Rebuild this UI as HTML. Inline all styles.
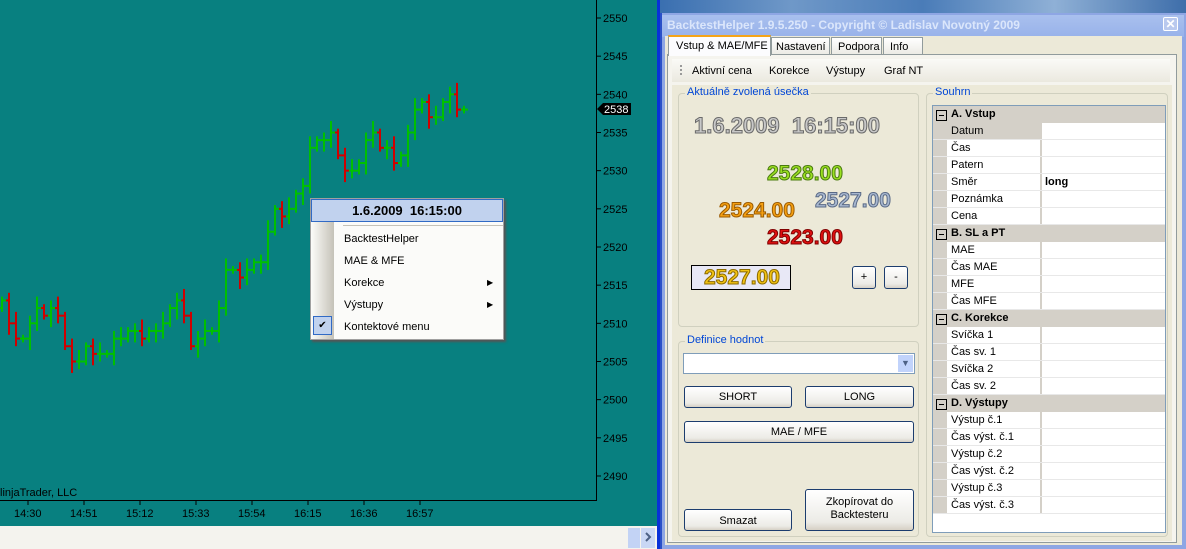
<!DOCTYPE html>
<html><head><meta charset="utf-8"><style>
*{margin:0;padding:0;box-sizing:border-box}
body{width:1186px;height:549px;overflow:hidden;position:relative;font-family:"Liberation Sans",Arial,sans-serif;font-size:11px;background:#088080}
.a{position:absolute}
.t{position:absolute;white-space:nowrap}
.btn{position:absolute;border:1px solid #1c3d6e;border-radius:3px;background:linear-gradient(#fff,#ecebe6 80%,#d6d0c5);text-align:center;font-size:11px;color:#000}
.gb{position:absolute;border:1px solid #d0d0bf;border-radius:4px}
.gl{position:absolute;background:#ece9d8;color:#0046d5;padding:0 2px;font-size:11px;top:-8px;left:6px;white-space:nowrap}
.big{position:absolute;font-family:"Liberation Sans",sans-serif;font-weight:bold;font-size:21px;white-space:nowrap}
.row{position:absolute;left:0;width:233px;height:17px;border-bottom:1px solid #e8e8e8}
.row .n{position:absolute;left:14px;width:94px;height:16px;background:#fff;border-right:1px solid #d4d0c8;padding:2px 4px;font-size:11px;white-space:nowrap}
.row .v{position:absolute;left:109px;right:0;height:16px;background:#fff;padding:2px 3px;font-weight:bold}
.cat{position:absolute;left:0;width:233px;height:17px;background:#d4d0c8;font-weight:bold;padding:2px 0 0 18px}
.cat:before{content:"";position:absolute;left:3px;top:4px;width:9px;height:9px;border:1px solid #000;background:linear-gradient(#000,#000) center/5px 1px no-repeat}
</style></head><body>
<svg class="a" style="left:0;top:0" width="660" height="549" id="ch">
<rect x="0" y="0" width="660" height="526" fill="#088080"/>
<line x1="596.5" y1="0" x2="596.5" y2="501" stroke="#000"/>
<line x1="0" y1="500.5" x2="597" y2="500.5" stroke="#000"/>
<rect x="0" y="526" width="660" height="23" fill="#f4f3ee"/>
<rect x="628" y="528" width="12" height="20" fill="#c3d3f5"/>
<rect x="641" y="528" width="14" height="20" fill="#c9d7f5"/>
<path d="M646 533l4 4-4 4" stroke="#4d6185" stroke-width="2" fill="none"/>
<rect x="657" y="0" width="3" height="549" fill="#0831d9"/>
</svg>
<div class="t" style="left:0;top:487px;color:#000;font-size:11px">linjaTrader, LLC</div>
<div class="a" style="left:310px;top:198px;width:194px;height:142px;background:#fbfbf9;border:1px solid #a0a0a0;box-shadow:2px 2px 2px #555">
 <div class="a" style="left:0;top:22px;width:23px;height:118px;background:linear-gradient(90deg,#fcfcf9,#c5c2b8)"></div>
 <div class="a" style="left:0;top:0;width:192px;height:23px;background:#c1d2ee;border:1px solid #316ac5;font-weight:bold;font-size:13px;text-align:center;line-height:21px">1.6.2009&nbsp; 16:15:00</div>
 <div class="a" style="left:32px;top:26px;width:160px;height:1px;background:#c5c2b8"></div>
 <div class="t" style="left:33px;top:34px">BacktestHelper</div>
 <div class="t" style="left:33px;top:56px">MAE &amp; MFE</div>
 <div class="t" style="left:33px;top:78px">Korekce</div>
 <div class="t" style="left:33px;top:100px">Výstupy</div>
 <div class="t" style="left:33px;top:122px">Kontektové menu</div>
 <div class="t" style="left:176px;top:79px;font-size:8px">▶</div>
 <div class="t" style="left:176px;top:101px;font-size:8px">▶</div>
 <div class="a" style="left:2px;top:117px;width:19px;height:19px;border:1px solid #316ac5;background:#c1d2ee;text-align:center;font-size:10px;line-height:17px">✔</div>
</div>
<div class="a" style="left:660px;top:0;width:526px;height:15px;background:linear-gradient(90deg,#3a6fb0,#6f98c8,#4a7cb8,#8fb0d6,#3e6eaa)"></div>
<div class="a" style="left:660px;top:13px;width:526px;height:536px;background:#8ea6e4;border-left:2px solid #2a50c8"></div>
<div class="a" style="left:662px;top:15px;width:522px;height:22px;background:linear-gradient(#a9c0ee,#98b2ea)"></div>
<div class="t" style="left:667px;top:18px;color:#dbe6fb;font-weight:bold;font-size:12px">BacktestHelper 1.9.5.250 - Copyright © Ladislav Novotný 2009</div>
<div class="a" style="left:1163px;top:17px;width:15px;height:14px;background:#b9c9ee;border:1px solid #fff;border-radius:2px;color:#fff;font-size:12px;line-height:12px;text-align:center;font-weight:bold">✕</div>
<div class="a" style="left:665px;top:36px;width:517px;height:509px;background:#ece9d8"></div>
<div class="a" style="left:667px;top:54px;width:510px;height:489px;border:1px solid #919b9c;background:#f5f4ee"></div>
<div class="a" style="left:668px;top:35px;width:103px;height:21px;background:#fcfcfe;border:1px solid #919b9c;border-bottom:none;border-top:2px solid #f5a418;font-size:11px;padding:3px 0 0 7px;white-space:nowrap">Vstup &amp; MAE/MFE</div>
<div class="a" style="left:771px;top:37px;width:59px;height:18px;background:linear-gradient(#fff,#ecebe5);border:1px solid #919b9c;padding:3px 0 0 4px;white-space:nowrap">Nastavení</div>
<div class="a" style="left:831px;top:37px;width:51px;height:18px;background:linear-gradient(#fff,#ecebe5);border:1px solid #919b9c;padding:3px 0 0 6px">Podpora</div>
<div class="a" style="left:883px;top:37px;width:40px;height:18px;background:linear-gradient(#fff,#ecebe5);border:1px solid #919b9c;padding:3px 0 0 6px">Info</div>
<div class="a" style="left:672px;top:59px;width:498px;height:23px;background:linear-gradient(#fafaf7,#ebe9df)"></div>
<div class="a" style="left:680px;top:65px;width:2px;height:11px;background:repeating-linear-gradient(#9a9a9a 0 2px,transparent 2px 4px)"></div>
<div class="t" style="left:692px;top:65px">Aktivní cena</div>
<div class="t" style="left:769px;top:65px">Korekce</div>
<div class="t" style="left:826px;top:65px">Výstupy</div>
<div class="t" style="left:884px;top:65px">Graf NT</div>
<div class="a" style="left:672px;top:85px;width:500px;height:456px;background:#ece9d8"></div>
<div class="gb" style="left:678px;top:93px;width:241px;height:234px"><div class="gl">Aktuálně zvolená úsečka</div></div>
<div class="big" style="left:694px;top:113px;font-size:22px;color:#c8c8c8;-webkit-text-stroke:1px #6a6a6a">1.6.2009&nbsp; 16:15:00</div>
<div class="big" style="left:767px;top:162px;color:#9be021;-webkit-text-stroke:1px #4a7a10">2528.00</div>
<div class="big" style="left:815px;top:189px;color:#a8b8d0;-webkit-text-stroke:1px #5a6a86">2527.00</div>
<div class="big" style="left:719px;top:199px;color:#f5a012;-webkit-text-stroke:1px #9a5a00">2524.00</div>
<div class="big" style="left:767px;top:226px;color:#e01010;-webkit-text-stroke:1px #800000">2523.00</div>
<div class="a" style="left:691px;top:265px;width:100px;height:25px;border:1px solid #000;background:#e8e8f6"></div>
<div class="big" style="left:704px;top:266px;color:#f3c313;-webkit-text-stroke:1px #8a6a00">2527.00</div>
<div class="btn" style="left:852px;top:266px;width:24px;height:23px;line-height:21px">+</div>
<div class="btn" style="left:884px;top:266px;width:24px;height:23px;line-height:21px">-</div>
<div class="gb" style="left:678px;top:341px;width:241px;height:196px"><div class="gl">Definice hodnot</div></div>
<div class="a" style="left:683px;top:353px;width:232px;height:21px;border:1px solid #7f9db9;background:#fff"><div class="a" style="right:1px;top:1px;width:15px;height:17px;background:#c1d3fb;color:#4d6185;font-size:9px;text-align:center;line-height:17px">▼</div></div>
<div class="btn" style="left:684px;top:386px;width:108px;height:22px;line-height:20px">SHORT</div>
<div class="btn" style="left:805px;top:386px;width:109px;height:22px;line-height:20px">LONG</div>
<div class="btn" style="left:684px;top:421px;width:230px;height:22px;line-height:20px">MAE / MFE</div>
<div class="btn" style="left:684px;top:509px;width:108px;height:22px;line-height:22px">Smazat</div>
<div class="btn" style="left:805px;top:489px;width:109px;height:42px;padding-top:6px;line-height:13px">Zkopírovat do<br>Backtesteru</div>
<div class="gb" style="left:926px;top:93px;width:242px;height:444px"><div class="gl">Souhrn</div></div>
<div class="a" style="left:932px;top:105px;width:234px;height:428px;border:1px solid #7f9db9;background:#fff;overflow:hidden" id="pg"></div>
<script>
var pg=document.getElementById('pg'),h='',y=0;
var data=[['A.  Vstup',[['Datum',''],['Čas',''],['Patern',''],['Směr','long'],['Poznámka',''],['Cena','']]],
['B.  SL a PT',[['MAE',''],['Čas MAE',''],['MFE',''],['Čas MFE','']]],
['C.  Korekce',[['Svíčka 1',''],['Čas sv. 1',''],['Svíčka 2',''],['Čas sv. 2','']]],
['D.  Výstupy',[['Výstup č.1',''],['Čas výst. č.1',''],['Výstup č.2',''],['Čas výst. č.2',''],['Výstup č.3',''],['Čas výst. č.3','']]]];
data.forEach(function(c){h+='<div class="cat" style="top:'+y+'px">'+c[0]+'</div>';y+=17;
c[1].forEach(function(r,i){h+='<div class="row" style="top:'+y+'px;background:#d4d0c8"><div class="n"'+(r[0]=='Datum'?' style="background:#d4d0c8"':'')+'>'+r[0]+'</div><div class="v">'+r[1]+'</div></div>';y+=17;});});
pg.innerHTML=h;
var s=document.getElementById('ch'),ns='http://www.w3.org/2000/svg';
function Y(p){return 18+(2550-p)*7.633}
function ln(x1,y1,x2,y2,c,w){var l=document.createElementNS(ns,'line');l.setAttribute('x1',x1);l.setAttribute('y1',y1);l.setAttribute('x2',x2);l.setAttribute('y2',y2);l.setAttribute('stroke',c);l.setAttribute('stroke-width',w||1);s.insertBefore(l,s.children[1]);}
function tx(x,y,t){var e=document.createElementNS(ns,'text');e.setAttribute('x',x);e.setAttribute('y',y);e.setAttribute('font-size','11');e.setAttribute('font-family','Liberation Sans,sans-serif');e.textContent=t;s.appendChild(e);}
for(var p=2550;p>=2490;p-=5){var yy=Y(p);ln(596,yy,601,yy,'#000');tx(603,yy+4,p);}
var tl=['14:30','14:51','15:12','15:33','15:54','16:15','16:36','16:57'];
tl.forEach(function(t,i){var x=28+i*56;ln(x,500,x,505,'#000');tx(x-14,517,t);});
var cl=[2513,2510,2508,2508,2510,2512,2511,2512,2511,2507,2505,2505,2507,2506,2506,2506,2508,2508,2509,2509,2508,2509,2509,2510,2512,2513,2511,2507,2508,2509,2509,2512,2517,2517,2516,2517,2518,2518,2522,2525,2524,2525,2527,2528,2533,2534,2534,2535,2532,2530,2530,2531,2534,2535,2533,2533,2531,2532,2535,2538,2539,2537,2537,2539,2540,2538,2538];
var o=2512;
for(var i=0;i<cl.length;i++){var x=i*7.0+2,c=cl[i];var up=c>=o;var col=up?'#00c000':'#d00000';
var hi=Math.max(o,c)+0.5+((i*7)%3)*0.5,lo=Math.min(o,c)-0.5-((i*5)%3)*0.5;
ln(x,Y(hi),x,Y(lo),col,2);ln(x-3,Y(o),x,Y(o),col,2);ln(x,Y(c),x+4,Y(c),col,2);o=c;}
var g=document.createElementNS(ns,'g');g.innerHTML='<path d="M597 109l6-6h28v12h-28z" fill="#000"/><text x="604" y="113" fill="#fff" font-size="11" font-family="Liberation Sans,sans-serif">2538</text>';s.appendChild(g);
</script>
</body></html>
